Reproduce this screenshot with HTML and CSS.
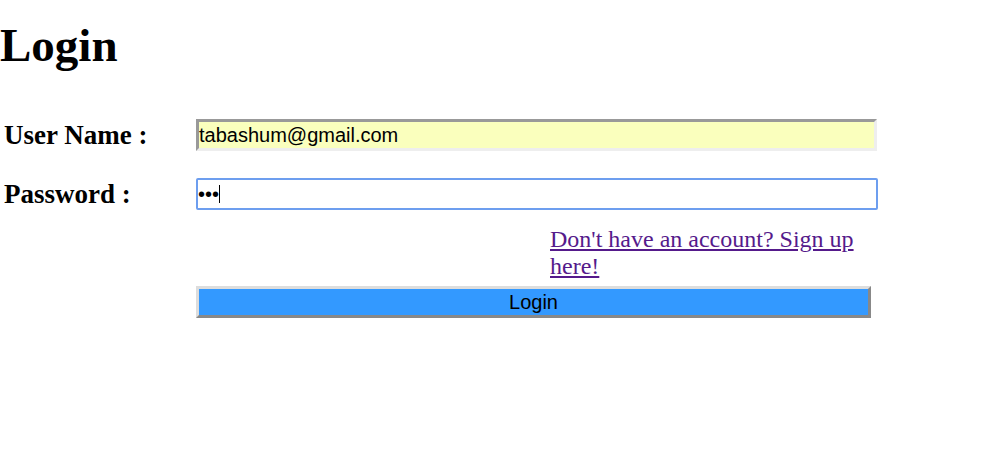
FILE: index.html
```html
<!DOCTYPE html>
<html lang="en">
<head>
<meta charset="utf-8">
<title>Login</title>
<link rel="stylesheet" href="styles.css">
</head>
<body>
<h1 class="title">Login</h1>
<form class="form">
  <div class="row row-user">
    <label class="label">User Name :</label>
    <div class="field field-filled">tabashum@gmail.com</div>
  </div>
  <div class="row row-pass">
    <label class="label">Password :</label>
    <div class="field field-focus"><span class="dots">&bull;&bull;&bull;</span><span class="caret"></span></div>
  </div>
  <div class="signup">
    <a class="signup-link" href="#">Don't have an account? Sign up here!</a>
  </div>
  <div class="row row-btn">
    <span class="label"></span>
    <button type="button" class="btn">Login</button>
  </div>
</form>
</body>
</html>
```
FILE: styles.css
```css
html, body {
  margin: 0;
  padding: 0;
  background: #ffffff;
}
body {
  font-family: "Liberation Serif", "Times New Roman", serif;
  color: #000;
}
.title {
  margin: 18px 0 0 0;
  font-size: 47px;
  line-height: 55px;
  font-weight: bold;
}
.form {
  display: flex;
  flex-direction: column;
}
.row {
  display: flex;
  align-items: center;
}
.row-user {
  margin-top: 46px;
}
.row-pass {
  margin-top: 27px;
}
.label {
  width: 192px;
  padding-left: 4px;
  font-size: 27px;
  font-weight: bold;
  flex: none;
}
.field {
  box-sizing: border-box;
  height: 32px;
  font-family: "Liberation Sans", Arial, sans-serif;
  font-size: 20px;
  line-height: 26px;
  display: flex;
  align-items: center;
}
.field-filled {
  width: 681px;
  background: #faffbd;
  border-style: solid;
  border-width: 3px;
  border-color: #999999 #eeeeee #eeeeee #999999;
}
.field-focus {
  width: 682px;
  background: #fff;
  border: 2px solid #6d9eef;
  border-radius: 2px;
}
.caret {
  display: inline-block;
  width: 1px;
  height: 18px;
  background: #000;
  margin-top: -1px;
}
.signup {
  margin-top: 16px;
  padding-left: 550px;
  width: 327px;
}
.signup-link {
  font-size: 24px;
  line-height: 27px;
  color: #551a8b;
}
.row-btn {
  margin-top: 6px;
}
.btn {
  box-sizing: border-box;
  width: 675px;
  height: 32px;
  margin: 0;
  padding: 0;
  background: #3399ff;
  border-style: solid;
  border-width: 3px;
  border-color: #dddddd #888888 #888888 #dddddd;
  font-family: "Liberation Sans", Arial, sans-serif;
  font-size: 20px;
  color: #000;
  line-height: 26px;
}
```
